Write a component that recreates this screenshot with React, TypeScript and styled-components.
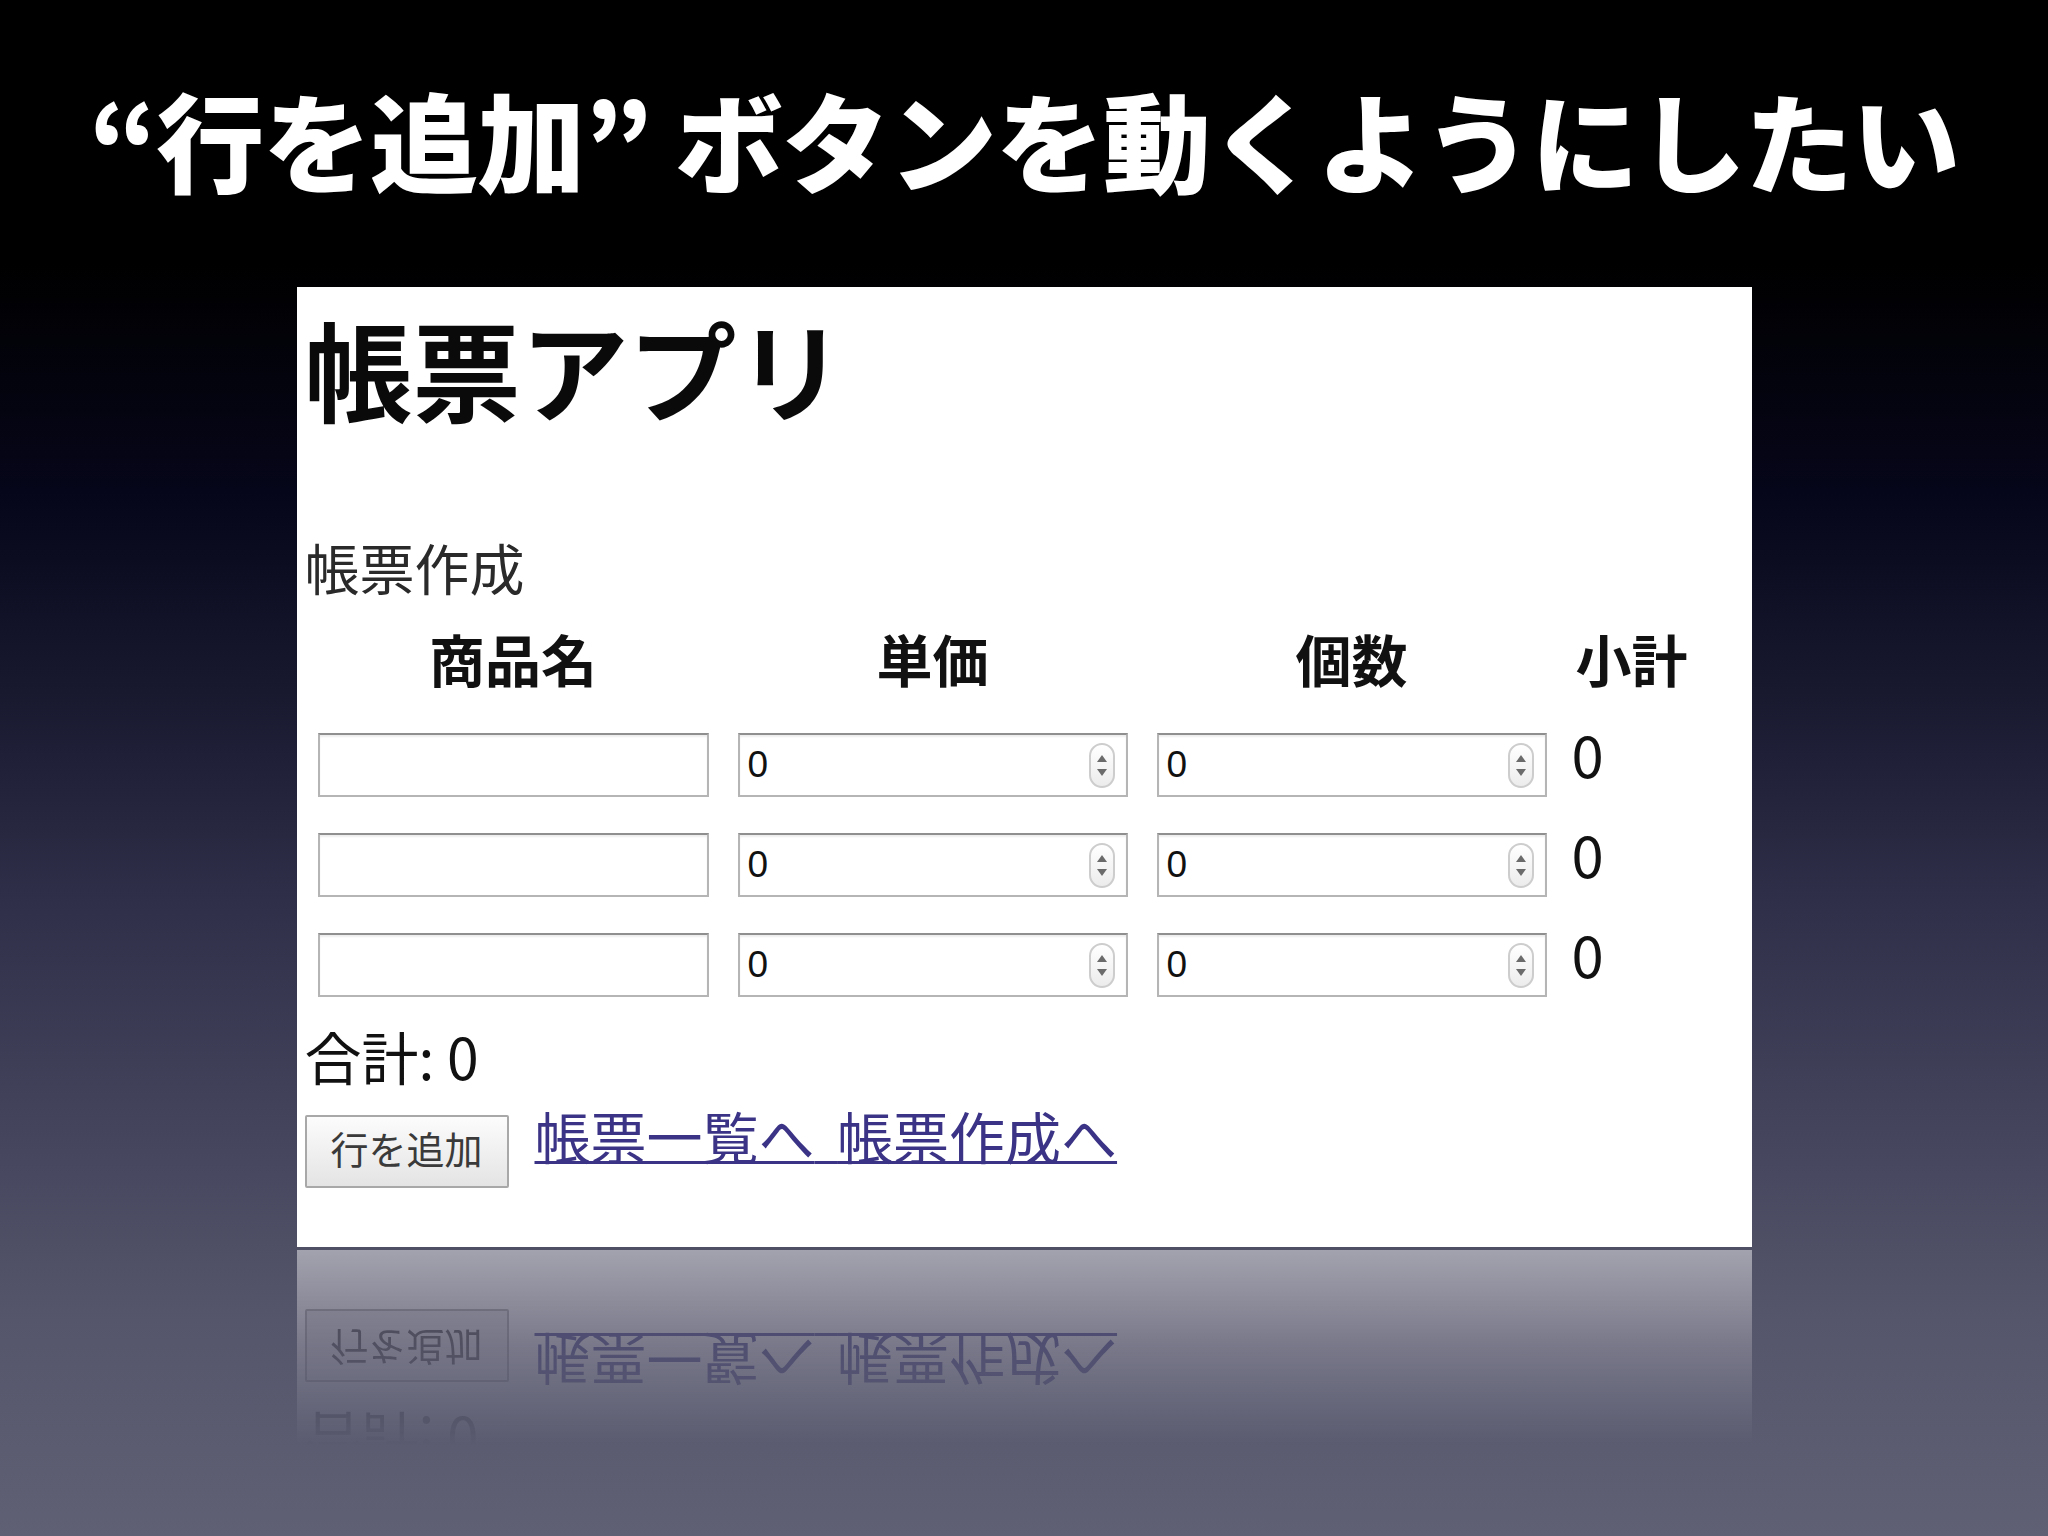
import styled, { createGlobalStyle } from "styled-components";

const GlobalStyle = createGlobalStyle`
  html, body {
    margin: 0;
    padding: 0;
    background: #000;
  }
`;

const rows = [0, 1, 2];

function Triangle({ up }: { up?: boolean }) {
  return (
    <svg width="10" height="7" viewBox="0 0 10 7">
      <path d={up ? "M5 0 L10 7 L0 7 Z" : "M0 0 L10 0 L5 7 Z"} fill="#6b6b6b" />
    </svg>
  );
}

function NumberInput() {
  return (
    <NumberField>
      <NumberValue type="text" defaultValue="0" readOnly />
      <Spinner>
        <Triangle up />
        <Triangle />
      </Spinner>
    </NumberField>
  );
}

function InvoiceForm() {
  return (
    <>
      <AppTitle>帳票アプリ</AppTitle>
      <SectionTitle>帳票作成</SectionTitle>

      <ItemTable>
        <HeadCell>商品名</HeadCell>
        <HeadCell>単価</HeadCell>
        <HeadCell>個数</HeadCell>
        <HeadCell>小計</HeadCell>
        {rows.map((r) => (
          <Row key={r}>
            <TextField type="text" defaultValue="" />
            <NumberInput />
            <NumberInput />
            <Subtotal>0</Subtotal>
          </Row>
        ))}
      </ItemTable>

      <Total>合計: 0</Total>

      <Actions>
        <AddRowButton type="button">行を追加</AddRowButton>
        <LinkGroup>
          <NavLink href="#list">帳票一覧へ</NavLink> <NavLink href="#new">帳票作成へ</NavLink>
        </LinkGroup>
      </Actions>
    </>
  );
}

export default function App() {
  return (
    <>
      <GlobalStyle />
      <Slide>
        <SlideTitle>“行を追加” ボタンを動くようにしたい</SlideTitle>
        <Sheet>
          <InvoiceForm />
        </Sheet>
        <Reflection aria-hidden>
          <MirroredSheet>
            <InvoiceForm />
          </MirroredSheet>
        </Reflection>
      </Slide>
    </>
  );
}

/* ── Slide ── */
const Slide = styled.main`
  width: 2048px;
  height: 1536px;
  box-sizing: border-box;
  padding-top: 84px;
  display: flex;
  flex-direction: column;
  align-items: center;
  overflow: hidden;
  font-family: "Noto Sans CJK JP", sans-serif;
  background: linear-gradient(
    to bottom,
    #000000 0%,
    #000000 17%,
    #06061a 32%,
    #18182f 45%,
    #2e2e48 58%,
    #42425b 72%,
    #55556b 86%,
    #606075 100%
  );
`;

const SlideTitle = styled.h1`
  margin: 0;
  font-size: 108px;
  line-height: 108px;
  font-weight: 900;
  letter-spacing: -1px;
  color: #ffffff;
  white-space: nowrap;
`;

/* ── Sheet (browser capture) ── */
const Sheet = styled.section`
  width: 1455px;
  height: 960px;
  margin-top: 95px;
  flex-shrink: 0;
  box-sizing: border-box;
  padding: 26px 0 0 8px;
  display: flex;
  flex-direction: column;
  align-items: flex-start;
  background: #ffffff;
  color: #111;
  font-family: "Noto Sans CJK JP", sans-serif;
`;

const Reflection = styled.div`
  width: 1455px;
  height: 195px;
  margin-top: 3px;
  flex-shrink: 0;
  overflow: hidden;
  pointer-events: none;
  -webkit-mask-image: linear-gradient(to bottom, rgba(0, 0, 0, 0.48) 0%, rgba(0, 0, 0, 0.2) 50%, rgba(0, 0, 0, 0) 100%);
  mask-image: linear-gradient(to bottom, rgba(0, 0, 0, 0.48) 0%, rgba(0, 0, 0, 0.2) 50%, rgba(0, 0, 0, 0) 100%);
`;

const MirroredSheet = styled(Sheet)`
  margin-top: 0;
  transform: scaleY(-1);
`;

const AppTitle = styled.h2`
  margin: 0;
  font-size: 108px;
  line-height: 108px;
  font-weight: 700;
  color: #0a0a0a;
`;

const SectionTitle = styled.p`
  margin: 118px 0 0;
  font-size: 55px;
  line-height: 55px;
  color: #2a2a2a;
`;

/* ── Table ── */
const ItemTable = styled.div`
  margin: 36px 0 0 13px;
  display: grid;
  grid-template-columns: 391px 390px 390px auto;
  column-gap: 29px;
  row-gap: 36px;
  align-items: start;
`;

const HeadCell = styled.div`
  margin-bottom: 11px;
  font-size: 56px;
  line-height: 56px;
  font-weight: 700;
  text-align: center;
  color: #111;
`;

const Row = styled.div`
  display: contents;
`;

const fieldBorder = `
  box-sizing: border-box;
  height: 64px;
  border: 2px solid #b5b5b5;
  border-top-color: #8f8f8f;
  box-shadow: inset 0 2px 2px rgba(0, 0, 0, 0.07);
  background: #ffffff;
`;

const TextField = styled.input`
  ${fieldBorder}
  width: 391px;
  margin: 0;
  padding: 0 8px;
  outline: none;
`;

const NumberField = styled.div`
  ${fieldBorder}
  width: 390px;
  display: flex;
  align-items: center;
  padding: 0 11px 0 8px;
`;

const NumberValue = styled.input`
  flex: 1;
  min-width: 0;
  margin: 0;
  padding: 0;
  border: none;
  outline: none;
  background: transparent;
  font-family: "Liberation Sans", Arial, sans-serif;
  font-size: 37px;
  color: #111;
`;

const Spinner = styled.span`
  box-sizing: border-box;
  width: 26px;
  height: 45px;
  display: flex;
  flex-direction: column;
  align-items: center;
  justify-content: center;
  gap: 7px;
  border: 2px solid #cdcdcd;
  border-radius: 13px;
  background: linear-gradient(to bottom, #ffffff, #ececec);
`;

const Subtotal = styled.div`
  margin-left: -4px;
  font-size: 58px;
  line-height: 40px;
  color: #111;
`;

/* ── Footer ── */
const Total = styled.p`
  margin: 30px 0 0;
  font-size: 57px;
  line-height: 57px;
  color: #111;
`;

const Actions = styled.div`
  margin-top: 23px;
  display: flex;
  align-items: flex-start;
  gap: 26px;
`;

const AddRowButton = styled.button`
  margin: 8px 0 0;
  width: 204px;
  height: 73px;
  padding: 0 0 8px;
  box-sizing: border-box;
  border: 2px solid #a8a8a8;
  border-radius: 2px;
  background: linear-gradient(to bottom, #fcfcfc, #e4e4e4);
  font-family: "Noto Sans CJK JP", sans-serif;
  font-size: 38px;
  line-height: 38px;
  color: #3a3a3a;
`;

const LinkGroup = styled.span`
  font-size: 56px;
  line-height: 56px;
  word-spacing: 10px;
  color: #3b3486;
  text-decoration: underline;
  text-decoration-thickness: 3px;
`;

const NavLink = styled.a`
  color: inherit;
  text-decoration: none;
`;
